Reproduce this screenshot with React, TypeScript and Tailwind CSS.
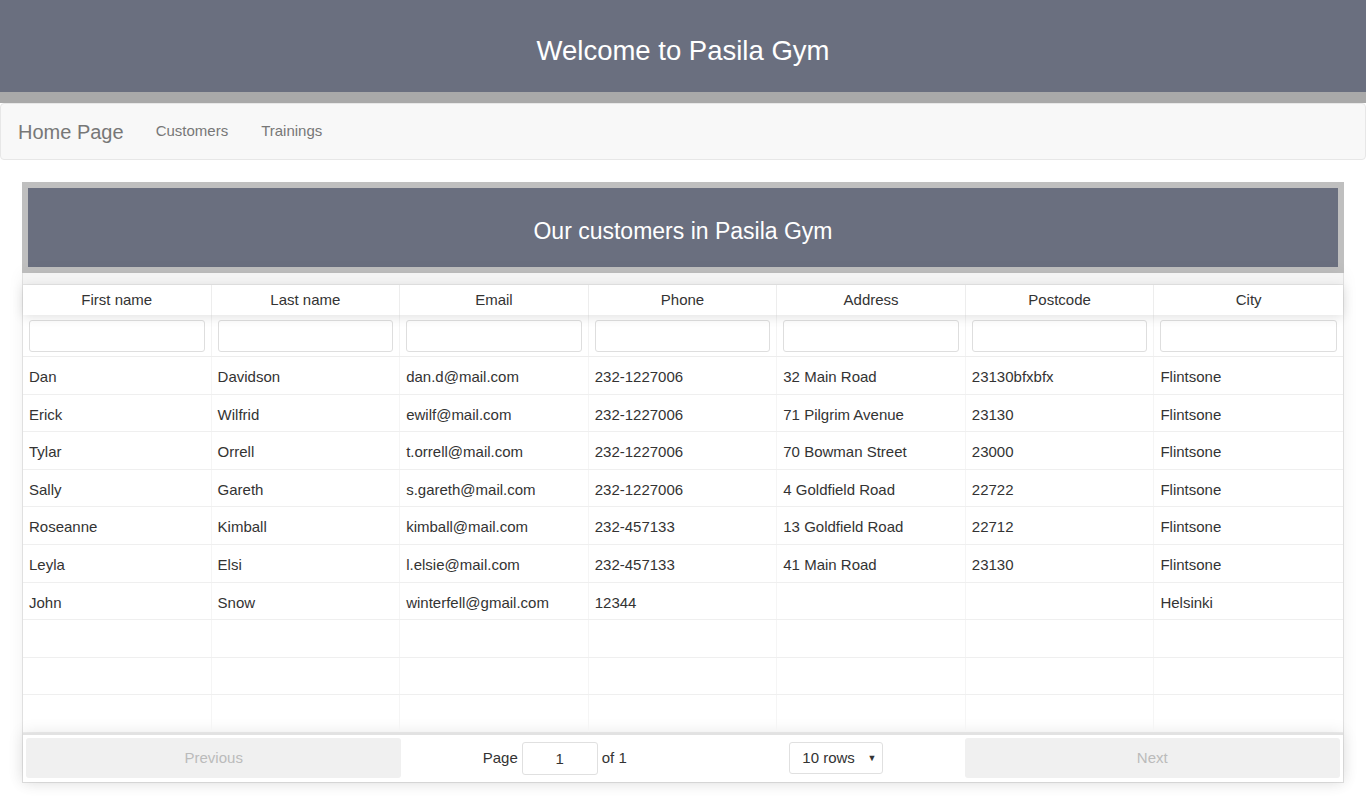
const customers = [
  ["Dan", "Davidson", "dan.d@mail.com", "232-1227006", "32 Main Road", "23130bfxbfx", "Flintsone"],
  ["Erick", "Wilfrid", "ewilf@mail.com", "232-1227006", "71 Pilgrim Avenue", "23130", "Flintsone"],
  ["Tylar", "Orrell", "t.orrell@mail.com", "232-1227006", "70 Bowman Street", "23000", "Flintsone"],
  ["Sally", "Gareth", "s.gareth@mail.com", "232-1227006", "4 Goldfield Road", "22722", "Flintsone"],
  ["Roseanne", "Kimball", "kimball@mail.com", "232-457133", "13 Goldfield Road", "22712", "Flintsone"],
  ["Leyla", "Elsi", "l.elsie@mail.com", "232-457133", "41 Main Road", "23130", "Flintsone"],
  ["John", "Snow", "winterfell@gmail.com", "12344", "", "", "Helsinki"],
  ["", "", "", "", "", "", ""],
  ["", "", "", "", "", "", ""],
  ["", "", "", "", "", "", ""],
];

const columns = ["First name", "Last name", "Email", "Phone", "Address", "Postcode", "City"];

export default function App() {
  return (
    <div className="min-h-screen bg-white text-[15px] text-[#333] font-['Liberation_Sans',Arial,sans-serif]">
      <header className="bg-[#6a6f7f] border-b-[11px] border-[#a9a9a9]">
        <h1 className="h-[92px] pt-[9px] flex items-center justify-center text-[27.5px] text-white">Welcome to Pasila Gym</h1>
      </header>

      <nav className="h-[57px] flex items-center bg-[#f8f8f8] border border-[#e7e7e7] rounded-[4px]">
        <a className="pl-[17px] pr-[32px] text-[20px] text-[#777]">Home Page</a>
        <a className="pr-[33px] text-[15px] text-[#777]">Customers</a>
        <a className="text-[15px] text-[#777]">Trainings</a>
      </nav>

      <main className="mx-[22px] mt-[22px]">
        <div className="border-[6px] border-[#bfbfbf] bg-[#6a6f7f] h-[91px] pt-[8px] flex items-center justify-center">
          <h2 className="text-[23px] text-white">Our customers in Pasila Gym</h2>
        </div>

        <div className="border border-[#e0e0e0] border-t-0 shadow-[0_0_15px_rgba(0,0,0,0.06)]">
          <div className="h-[12px] bg-[#f4f4f4] border-b border-[#e6e6e6]" />
          <div className="grid grid-cols-7 h-[30px] shadow-[0_2px_12px_rgba(0,0,0,0.12)] relative">
            {columns.map((c, i) => (
              <div key={c} className={`flex items-center justify-center ${i < 6 ? "border-r border-[#ededed]" : ""}`}>
                {c}
              </div>
            ))}
          </div>
          <div className="grid grid-cols-7 h-[42px] border-b border-[#ededed]">
            {columns.map((c, i) => (
              <div key={c} className={`flex items-center px-[6px] ${i < 6 ? "border-r border-[#f3f3f3]" : ""}`}>
                <input className="w-full h-[32px] border border-[#dedede] rounded-[3px] bg-white outline-none" />
              </div>
            ))}
          </div>
          {customers.map((row, r) => (
            <div key={r} className="grid grid-cols-7 h-[37.6px] border-b border-[#efefef]">
              {row.map((v, i) => (
                <div key={i} className={`flex items-center px-[6px] pt-[4px] ${i < 6 ? "border-r border-[#f5f5f5]" : ""}`}>
                  {v}
                </div>
              ))}
            </div>
          ))}
          <div className="grid grid-cols-[1fr_1.5fr_1fr] items-center h-[49px] p-[3px] border-t-2 border-[#e2e2e2] shadow-[0_0_15px_rgba(0,0,0,0.1)]">
            <button className="h-[40px] bg-[#f0f0f0] rounded-[3px] text-[#bbb]">Previous</button>
            <div className="flex items-center justify-around">
              <div className="mx-[10px] flex items-center gap-[4px]">
                <span>Page</span>
                <input defaultValue="1" className="w-[76px] h-[33px] border border-[#e0e0e0] rounded-[3px] text-center outline-none" />
                <span>of 1</span>
              </div>
              <div className="mx-[10px] w-[94px] h-[32px] border border-[#e0e0e0] rounded-[3px] flex items-center justify-between pl-[12px] pr-[6px]">
                <span>10 rows</span>
                <span className="text-[9px]">▼</span>
              </div>
            </div>
            <button className="h-[40px] bg-[#f0f0f0] rounded-[3px] text-[#bbb]">Next</button>
          </div>
        </div>
      </main>
    </div>
  );
}
